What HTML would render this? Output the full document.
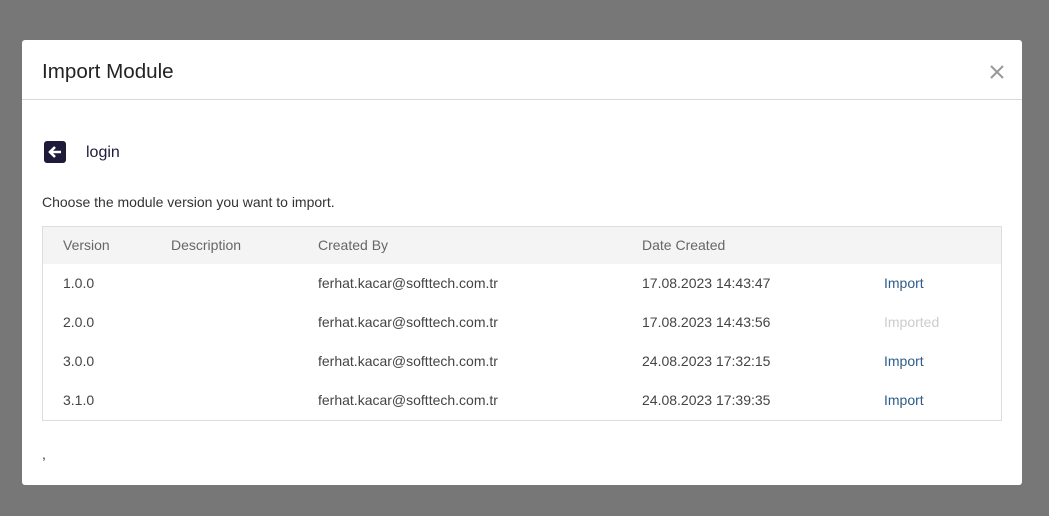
<!DOCTYPE html>
<html><head><meta charset="utf-8"><style>
*{margin:0;padding:0;box-sizing:border-box}
body{width:1049px;height:516px;background:#777;font-family:"Liberation Sans",sans-serif;position:relative;overflow:hidden}
.m{position:absolute;left:22px;top:40px;width:1000px;height:445px;background:#fff;border-radius:3px}
.h{height:60px;border-bottom:1px solid #d9d9d9;position:relative}
.h h1{position:absolute;left:20px;top:20px;font-size:20.6px;font-weight:normal;color:#222}
.x{position:absolute;left:967px;top:24px}
.bk{position:absolute;left:22px;top:101px;width:22px;height:22px;background:#1e1b3a;border-radius:3px}
.lg{position:absolute;left:64px;top:104px;font-size:16px;color:#1e1b3a}
.ch{position:absolute;left:20px;top:154px;font-size:14px;color:#333}
.t{position:absolute;left:20px;top:186px;width:960px;height:195px;border:1px solid #ddd}
.hr{height:37px;background:#f4f4f4}
.c{position:absolute;font-size:14px;color:#444}
.hd{color:#666}
.imp{color:#2e5c8a}
.dis{color:#ccc}
.cm{position:absolute;left:20px;top:406px;font-size:14px;color:#333}
</style></head><body>
<div class="m">
<div class="h"><h1>Import Module</h1>
<svg class="x" width="16" height="16" viewBox="0 0 16 16"><path d="M2 2L14 14M14 2L2 14" stroke="#999" stroke-width="2"/></svg></div>
<div class="bk"><svg width="22" height="22" viewBox="0 0 22 22"><path d="M17 11H6M11 6L6 11L11 16" stroke="#fff" stroke-width="2.6" fill="none"/></svg></div>
<div class="lg">login</div>
<div class="ch">Choose the module version you want to import.</div>
<div class="t"><div class="hr"></div>
<div class="c hd" style="left:20px;top:10px">Version</div>
<div class="c hd" style="left:128px;top:10px">Description</div>
<div class="c hd" style="left:275px;top:10px">Created By</div>
<div class="c hd" style="left:599px;top:10px">Date Created</div>
<div class="c" style="left:20px;top:48px">1.0.0</div><div class="c" style="left:275px;top:48px">ferhat.kacar@softtech.com.tr</div><div class="c" style="left:599px;top:48px">17.08.2023 14:43:47</div><div class="c imp" style="left:841px;top:48px">Import</div>
<div class="c" style="left:20px;top:87px">2.0.0</div><div class="c" style="left:275px;top:87px">ferhat.kacar@softtech.com.tr</div><div class="c" style="left:599px;top:87px">17.08.2023 14:43:56</div><div class="c dis" style="left:841px;top:87px">Imported</div>
<div class="c" style="left:20px;top:126px">3.0.0</div><div class="c" style="left:275px;top:126px">ferhat.kacar@softtech.com.tr</div><div class="c" style="left:599px;top:126px">24.08.2023 17:32:15</div><div class="c imp" style="left:841px;top:126px">Import</div>
<div class="c" style="left:20px;top:165px">3.1.0</div><div class="c" style="left:275px;top:165px">ferhat.kacar@softtech.com.tr</div><div class="c" style="left:599px;top:165px">24.08.2023 17:39:35</div><div class="c imp" style="left:841px;top:165px">Import</div>
</div>
<div class="cm">,</div>
</div>
</body></html>
